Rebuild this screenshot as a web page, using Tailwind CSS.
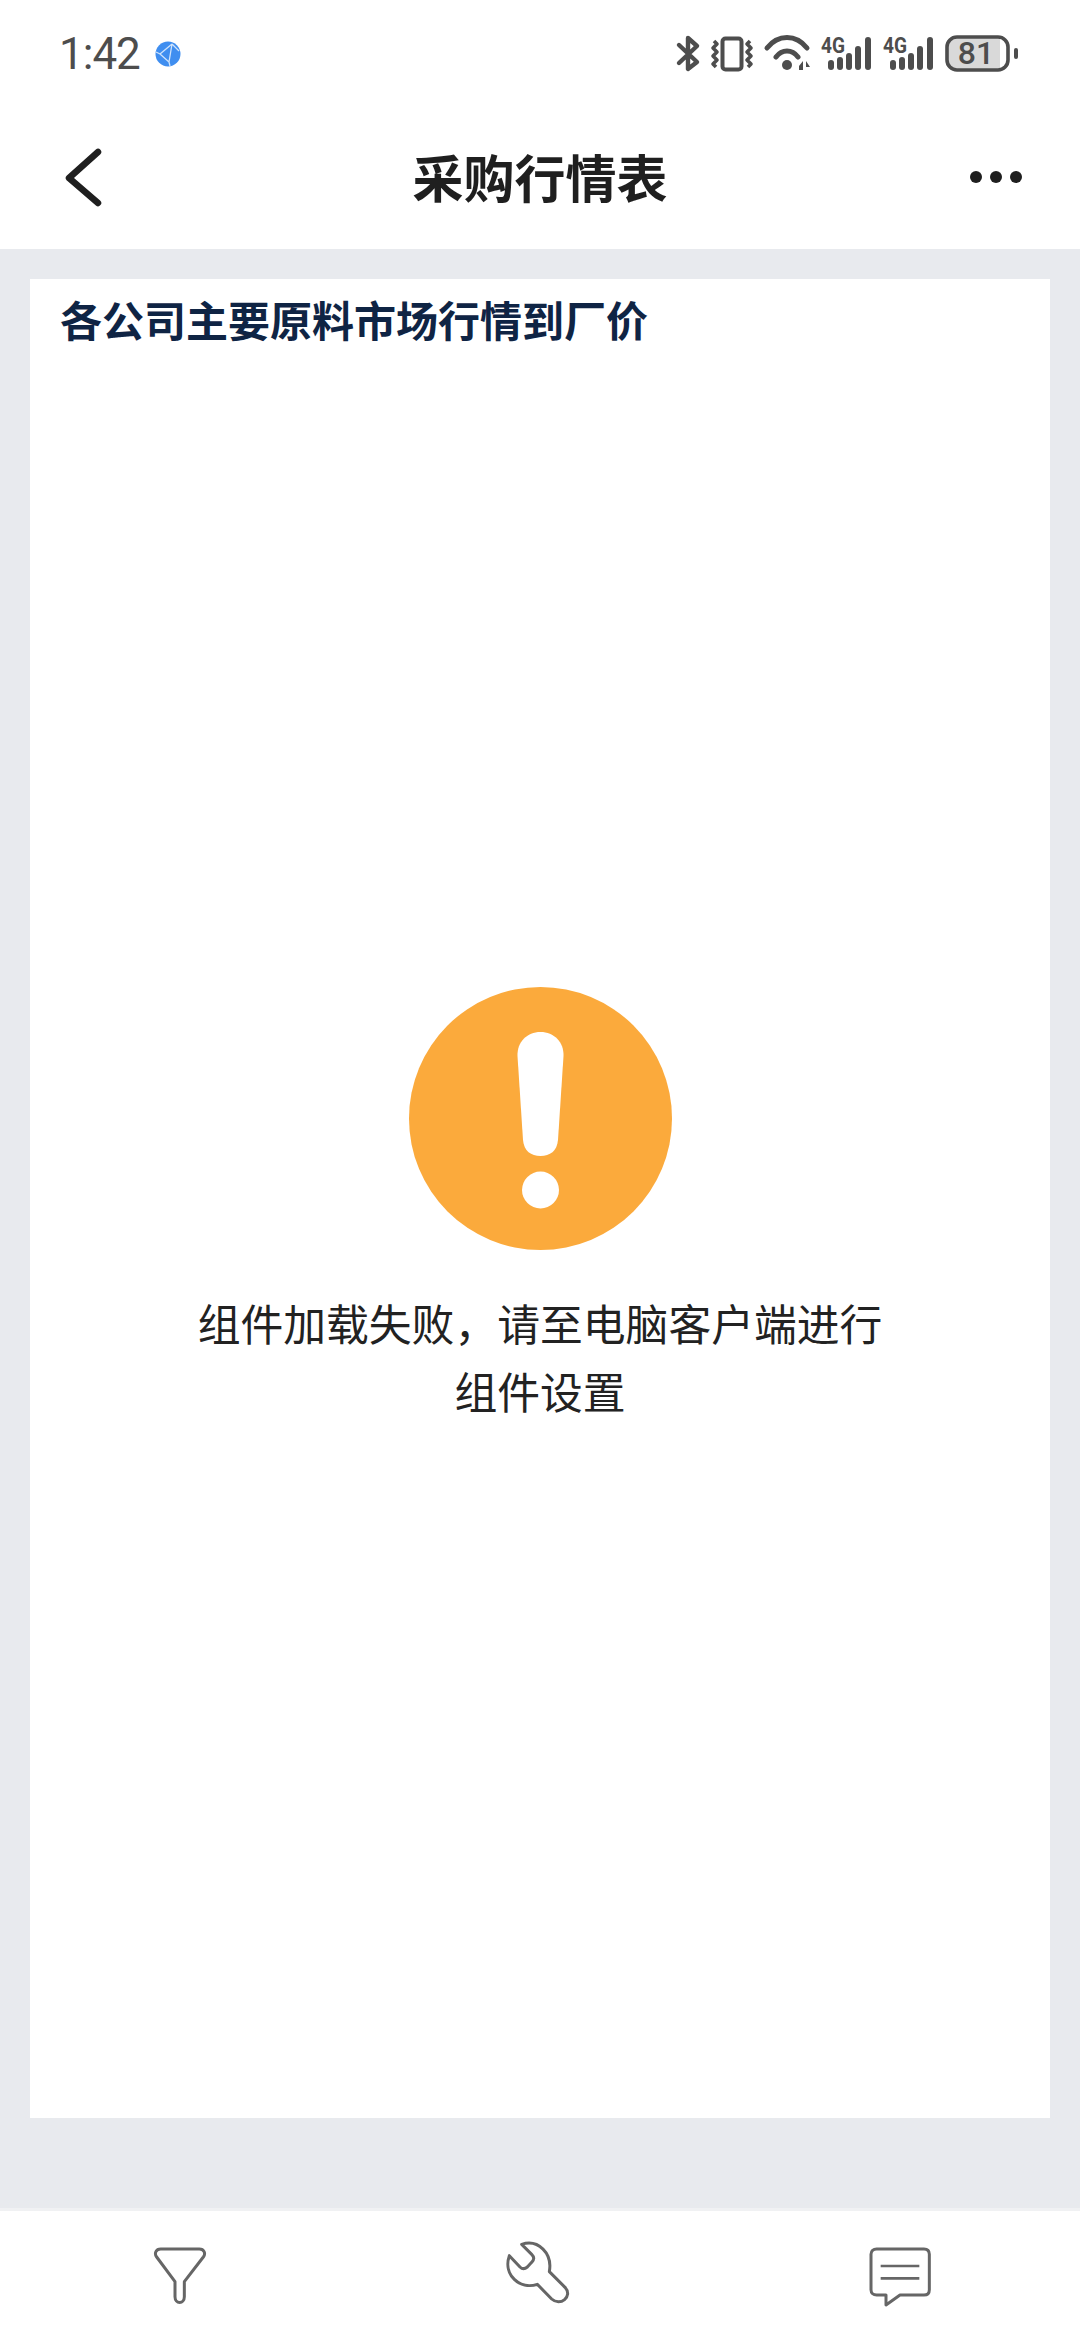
<!DOCTYPE html>
<html lang="zh-CN">
<head>
  <meta charset="UTF-8" />
  <meta name="viewport" content="width=device-width, initial-scale=1.0"/>
  <title>采购行情表</title>
  <script src="https://cdn.jsdelivr.net/npm/@tailwindcss/browser@4"></script>
</head>
<body class="bg-white font-['Noto_Sans_CJK_SC','Noto_Sans',sans-serif]">
  <div class="w-[1080px] h-[2340px] flex flex-col overflow-hidden">

    <!-- status bar -->
    <div class="h-[107px] shrink-0 flex items-start justify-between">
      <div class="flex items-center pl-[59px] pt-[25px] gap-[15px]">
        <span class="font-['Roboto',sans-serif] text-[44px] leading-[58px] text-[#4d4d4d] tracking-[-1px]">1:42</span>
        <svg class="w-[26px] h-[26px]" viewBox="0 0 26 26">
          <circle cx="13" cy="13" r="12.5" fill="#3f8ef0"/>
          <path d="M17 3 L5 13 L14 21 L17 3 M5 13 L1 11 M14 21 L15 25 M17 3 L24 10" stroke="#cfe3fb" stroke-width="1.3" fill="none"/>
        </svg>
      </div>
      <svg class="w-[350px] h-[55px] mt-[25px] mr-[60px]" viewBox="670 25 350 55" fill="none">
        <!-- bluetooth -->
        <path d="M679 45 L697 62 L688 69 V38 L697 46 L679 63" stroke="#4d4d4d" stroke-width="4.4" stroke-linecap="round" stroke-linejoin="round"/>
        <!-- vibrate -->
        <rect x="722.5" y="38.5" width="19" height="31" rx="3" stroke="#4d4d4d" stroke-width="4"/>
        <path d="M714 41 L717 44 L713 48 L717 52 L713 56 L717 60 L713 64 L716 67" stroke="#4d4d4d" stroke-width="3.6" stroke-linejoin="round"/>
        <path d="M750 41 L747 44 L751 48 L747 52 L751 56 L747 60 L751 64 L748 67" stroke="#4d4d4d" stroke-width="3.6" stroke-linejoin="round"/>
        <!-- wifi -->
        <path d="M767 48 C778 34 796 34 807 48" stroke="#4d4d4d" stroke-width="5" stroke-linecap="round"/>
        <path d="M776 57 C782 49 792 49 798 57" stroke="#4d4d4d" stroke-width="5" stroke-linecap="round"/>
        <circle cx="787" cy="65" r="5" fill="#4d4d4d"/>
        <path d="M799 66 L803 61 V70 H799 Z M806 61 L810 67 H806 Z" fill="#4d4d4d"/>
        <!-- signal 1 -->
        <text x="821" y="53" font-family="Roboto, sans-serif" font-size="22" font-weight="700" fill="#4d4d4d" textLength="24" lengthAdjust="spacingAndGlyphs">4G</text>
        <g fill="#4d4d4d">
          <rect x="828" y="60" width="6" height="10" rx="3"/>
          <rect x="837" y="57" width="6" height="13" rx="3"/>
          <rect x="846" y="53" width="6" height="17" rx="3"/>
          <rect x="855" y="46" width="6" height="24" rx="3"/>
          <rect x="865" y="37" width="6" height="33" rx="3"/>
        </g>
        <!-- signal 2 -->
        <text x="883" y="53" font-family="Roboto, sans-serif" font-size="22" font-weight="700" fill="#4d4d4d" textLength="24" lengthAdjust="spacingAndGlyphs">4G</text>
        <g fill="#4d4d4d">
          <rect x="890" y="60" width="6" height="10" rx="3"/>
          <rect x="899" y="57" width="6" height="13" rx="3"/>
          <rect x="908" y="53" width="6" height="17" rx="3"/>
          <rect x="917" y="46" width="6" height="24" rx="3"/>
          <rect x="927" y="37" width="6" height="33" rx="3"/>
        </g>
        <!-- battery -->
        <path d="M958 38 H1000 V69 H958 C952 69 948 65 948 60 V47 C948 42 952 38 958 38 Z" fill="#d9d9d9"/>
        <rect x="947" y="37" width="61" height="33" rx="10" stroke="#4d4d4d" stroke-width="3.6"/>
        <rect x="1014" y="48" width="4" height="11" rx="2" fill="#4d4d4d"/>
        <text x="976" y="64" text-anchor="middle" font-family="Roboto, sans-serif" font-size="32" font-weight="500" fill="#4d4d4d">81</text>
      </svg>
    </div>

    <!-- nav bar -->
    <div class="h-[142px] shrink-0 grid grid-cols-[1fr_auto_1fr] items-center">
      <div class="pl-[64px]">
        <svg class="w-[40px] h-[60px]" viewBox="0 0 40 60" fill="none">
          <path d="M34 4 L5 30 L34 55" stroke="#1f1f1f" stroke-width="6.5" stroke-linecap="round" stroke-linejoin="round"/>
        </svg>
      </div>
      <h1 class="text-[51px] leading-[60px] font-bold text-[#1f1f1f] mb-[5px]">采购行情表</h1>
      <div class="flex justify-end gap-[8px] pr-[58px] mb-[2px]">
        <span class="w-[12px] h-[12px] rounded-full bg-[#1f1f1f]"></span>
        <span class="w-[12px] h-[12px] rounded-full bg-[#1f1f1f]"></span>
        <span class="w-[12px] h-[12px] rounded-full bg-[#1f1f1f]"></span>
      </div>
    </div>

    <!-- content -->
    <div class="h-[1962px] shrink-0 bg-[#e8eaee] px-[30px] pt-[30px] border-b-[3px] border-[#f0f1f3]">
      <div class="h-[1839px] bg-white">
        <h2 class="pl-[30px] pt-[10px] text-[42px] leading-[60px] font-bold text-[#0f2444]">各公司主要原料市场行情到厂价</h2>
        <div class="flex flex-col items-center pt-[638px]">
          <div class="w-[263px] h-[263px] rounded-full bg-[#fbaa3c] flex items-center justify-center">
            <svg class="w-[263px] h-[263px]" viewBox="0 0 263 263">
              <path d="M131.5 45 C145 45 155 55 154.5 69 L149 153 C148 164 141 169 131.5 169 C122 169 115 164 114 153 L108.5 69 C108 55 118 45 131.5 45 Z" fill="#fff"/>
              <circle cx="131.5" cy="203" r="18.5" fill="#fff"/>
            </svg>
          </div>
          <p class="w-[720px] mt-[38px] text-center text-[42.8px] leading-[68px] text-[#222]">组件加载失败，请至电脑客户端进行组件设置</p>
        </div>
      </div>
    </div>

    <!-- bottom toolbar -->
    <div class="flex-1 bg-white grid grid-cols-3 items-start">
      <div class="flex justify-center pt-[14px]">
        <svg class="w-[120px] h-[95px] translate-x-[10px]" viewBox="0 0 360 285" fill="none">
          <path d="M92 72 H208 C222 72 228 85 220 96 L163 170 V215 C163 238 135 238 135 215 V170 L80 96 C72 85 78 72 92 72 Z" stroke="#666" stroke-width="9" stroke-linejoin="round"/>
        </svg>
      </div>
      <div class="flex justify-center pt-[14px]">
        <svg class="w-[120px] h-[95px]" viewBox="0 0 360 285" fill="none">
          <path d="M125 58 C175 42 218 85 208 140 L255 187 C280 215 240 245 215 222 L172 178 C120 195 68 150 88 92 L120 126 C128 134 135 132 142 126 L155 112 C163 104 163 96 155 88 Z" stroke="#666" stroke-width="9" stroke-linejoin="round"/>
        </svg>
      </div>
      <div class="flex justify-center pt-[14px]">
        <svg class="w-[120px] h-[95px] translate-x-[10px]" viewBox="0 0 360 285" fill="none">
          <path d="M80 72 H222 C232 72 238 78 238 88 V194 C238 204 232 210 222 210 H150 L108 240 V210 H80 C70 210 63 204 63 194 V88 C63 78 70 72 80 72 Z" stroke="#666" stroke-width="9" stroke-linejoin="round"/>
          <path d="M92 123 H208 M92 160 H208" stroke="#666" stroke-width="8"/>
        </svg>
      </div>
    </div>
  </div>
</body>
</html>
